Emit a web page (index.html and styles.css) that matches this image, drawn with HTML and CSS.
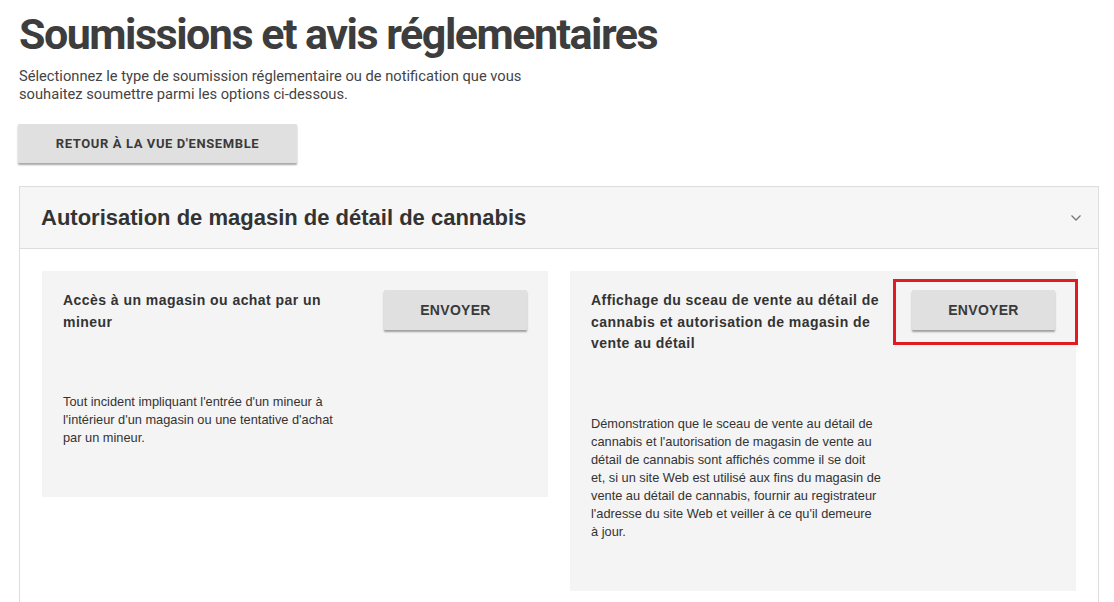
FILE: index.html
```html
<!DOCTYPE html>
<html lang="fr">
<head>
    <meta charset="UTF-8">
    <meta name="viewport" content="width=device-width, initial-scale=1.0">
    <title>Soumissions et avis réglementaires</title>
    <link rel="stylesheet" href="styles.css">
</head>
<body>
    <div class="page">
        <h1 class="page-title">Soumissions et avis réglementaires</h1>
        <p class="intro">Sélectionnez le type de soumission réglementaire ou de notification que vous souhaitez soumettre parmi les options ci-dessous.</p>
        <button class="btn btn-back">RETOUR À LA VUE D'ENSEMBLE</button>

        <div class="accordion">
            <div class="accordion-header">
                <h2>Autorisation de magasin de détail de cannabis</h2>
                <svg class="chevron" width="12" height="8" viewBox="0 0 12 8">
                    <path d="M1.5 1.5 L6 6 L10.5 1.5" fill="none" stroke="#777" stroke-width="1.3"/>
                </svg>
            </div>
            <div class="accordion-body">
                <div class="card">
                    <div class="card-top">
                        <h3 class="card-title">Accès à un magasin ou achat par un mineur</h3>
                        <div class="card-action">
                            <button class="btn btn-send">ENVOYER</button>
                        </div>
                    </div>
                    <p class="card-desc">Tout incident impliquant l'entrée d'un mineur à<br>
                        l'intérieur d'un magasin ou une tentative d'achat<br>
                        par un mineur.</p>
                </div>
                <div class="card">
                    <div class="card-top">
                        <h3 class="card-title">Affichage du sceau de vente au détail de cannabis et autorisation de magasin de vente au détail</h3>
                        <div class="card-action">
                            <button class="btn btn-send">ENVOYER</button>
                            <span class="highlight"></span>
                        </div>
                    </div>
                    <p class="card-desc">Démonstration que le sceau de vente au détail de<br>
                        cannabis et l'autorisation de magasin de vente au<br>
                        détail de cannabis sont affichés comme il se doit<br>
                        et, si un site Web est utilisé aux fins du magasin de<br>
                        vente au détail de cannabis, fournir au registrateur<br>
                        l'adresse du site Web et veiller à ce qu'il demeure<br>
                        à jour.</p>
                </div>
            </div>
        </div>
    </div>
</body>
</html>
```

FILE: styles.css
```css
body {
    margin: 0;
    padding: 0;
    background: #fff;
    font-family: Roboto, Arial, sans-serif;
    color: #444;
}
.page {
    padding: 0 15px 0 19px;
}
.page-title {
    margin: 0;
    padding-top: 9px;
    font-size: 43px;
    font-weight: 700;
    line-height: 50px;
    color: #3d3d3d;
    letter-spacing: -1.5px;
}
.intro {
    margin: 8px 0 0;
    width: 530px;
    font-size: 14.7px;
    line-height: 18px;
    color: #444;
}
.btn {
    border: none;
    background: #e0e0e0;
    color: #3a3a3a;
    font-weight: 700;
    box-shadow: 0 2px 2px rgba(0,0,0,0.35);
    border-radius: 1px;
    cursor: pointer;
}
.btn-back {
    margin: 21px 0 0 -1px;
    width: 279px;
    height: 39px;
    font-family: Roboto, Arial, sans-serif;
    font-size: 13px;
    letter-spacing: 0.6px;
}
.accordion {
    margin-top: 23px;
    border: 1px solid #ddd;
    border-bottom: none;
}
.accordion-header {
    display: flex;
    align-items: center;
    justify-content: space-between;
    height: 61px;
    padding: 0 16px 0 21px;
    background: #f6f6f6;
    border-bottom: 1px solid #ddd;
}
.accordion-header h2 {
    margin: 0;
    font-family: "Liberation Sans", Arial, sans-serif;
    font-size: 22px;
    font-weight: 700;
    color: #333;
}
.accordion-body {
    display: grid;
    grid-template-columns: 506px 506px;
    gap: 22px;
    align-items: start;
    padding: 22px 22px 12px;
}
.card {
    background: #f4f4f4;
    padding: 19px 21px 50px;
}
.card-top {
    display: flex;
    justify-content: space-between;
    align-items: flex-start;
}
.card-title {
    margin: 0;
    width: 296px;
    font-family: "Liberation Sans", Arial, sans-serif;
    font-size: 14px;
    font-weight: 700;
    line-height: 21.5px;
    letter-spacing: 0.45px;
    color: #333;
}
.card-action {
    position: relative;
}
.btn-send {
    width: 143px;
    height: 40px;
    font-family: "Liberation Sans", Arial, sans-serif;
    font-size: 14px;
    letter-spacing: 0.3px;
}
.highlight {
    position: absolute;
    left: -19px;
    top: -11px;
    right: -23px;
    bottom: -15px;
    border: 3px solid #e11b22;
    pointer-events: none;
}
.card-desc {
    margin: 60px 0 0;
    width: 310px;
    font-family: "Liberation Sans", Arial, sans-serif;
    font-size: 12.8px;
    line-height: 18px;
    color: #333;
}
```
